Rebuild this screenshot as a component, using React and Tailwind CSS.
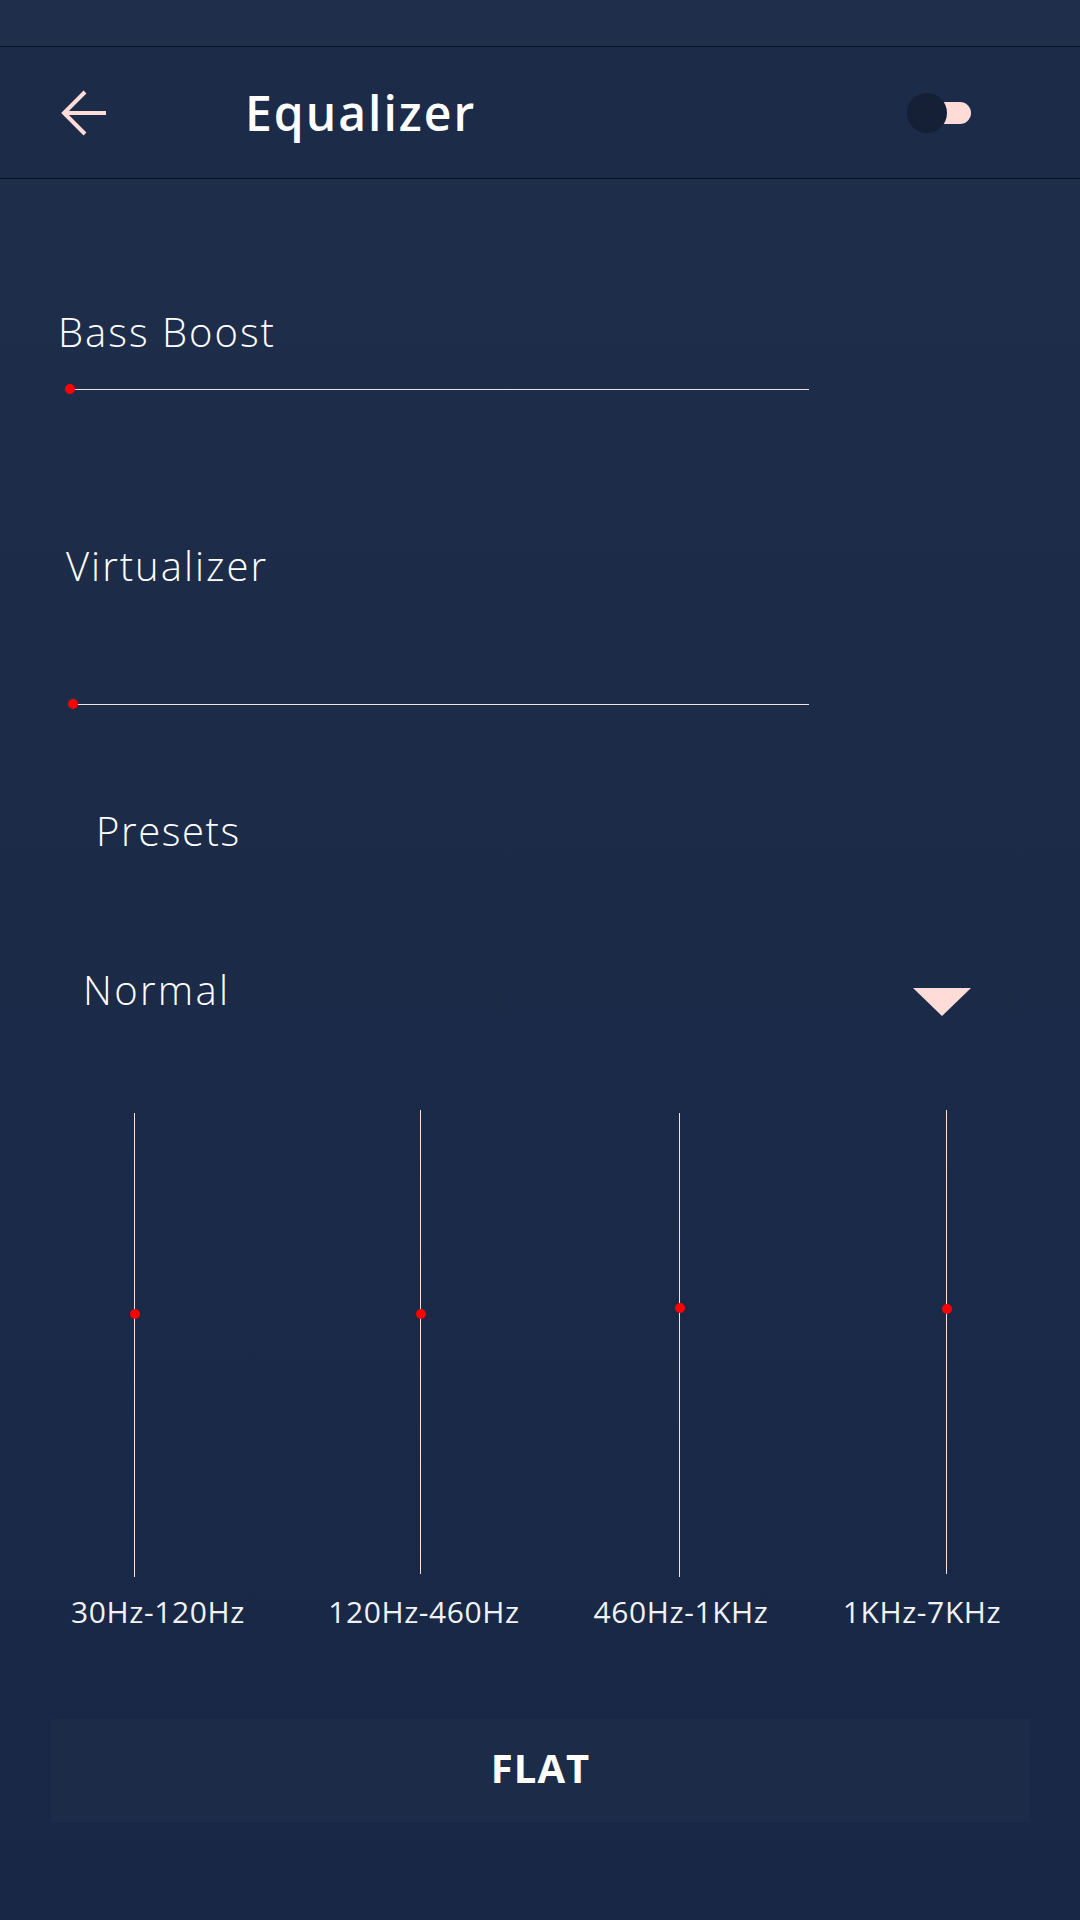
import { useState } from 'react'

const BANDS = [
  { label: '30Hz-120Hz', offset: 3, thumb: 201 },
  { label: '120Hz-460Hz', offset: 0, thumb: 204 },
  { label: '460Hz-1KHz', offset: 3, thumb: 195 },
  { label: '1KHz-7KHz', offset: 0, thumb: 199 },
]

function HSlider({ start, className }) {
  return (
    <div className={`relative flex h-[12px] items-center ${className}`}>
      <div className="h-[1px] bg-[#f3e2e0]" style={{ marginLeft: start, width: 809 - start }} />
      <div
        className="absolute top-[1px] h-[10px] w-[10px] rounded-full bg-[#ff0000]"
        style={{ left: start - 5 }}
      />
    </div>
  )
}

function VSlider({ band, className }) {
  return (
    <div className={`relative flex h-[464px] w-[11px] justify-center ${className}`} style={{ marginTop: band.offset }}>
      <div className="h-full w-[1px] bg-[#f3e2e0]" />
      <div
        className="absolute left-[0.5px] h-[10px] w-[10px] rounded-full bg-[#ff0000]"
        style={{ top: band.thumb - 5 }}
      />
    </div>
  )
}

export default function App() {
  const [enabled, setEnabled] = useState(false)

  return (
    <div className="flex h-[1920px] w-[1080px] flex-col overflow-hidden bg-gradient-to-b from-[#1f2e4a] to-[#172745] font-['Open_Sans','Liberation_Sans',sans-serif] text-white">
      <div className="h-[47px] border-b border-[#0a101c] bg-[#1f2e4a]" />

      <header className="flex h-[132px] items-center border-b border-[#0a101c] bg-[#1c2b48]">
        <button type="button" className="ml-[60px] flex h-[46px] w-[48px] items-center justify-center">
          <svg width="48" height="46" viewBox="0 0 48 46" fill="none">
            <path d="M46 23H5M25 2L4 23L25 44" stroke="#ffdcd8" strokeWidth="4" />
          </svg>
        </button>
        <h1 className="ml-[137px] text-[48px] font-semibold leading-none tracking-[2px]">Equalizer</h1>
        <button
          type="button"
          onClick={() => setEnabled(!enabled)}
          className="relative ml-auto mr-[109px] h-[40px] w-[64px]"
        >
          <span className="absolute left-[20px] top-[9px] h-[22px] w-[44px] rounded-r-full bg-[#ffdcd8]" />
          <span className="absolute left-0 top-0 h-[40px] w-[40px] rounded-full bg-[#152036]" />
        </button>
      </header>

      <p className="ml-[58px] mt-[133px] text-[40px] font-light leading-[40px] tracking-[2px]">Bass Boost</p>
      <HSlider start={70} className="mt-[31px]" />

      <p className="ml-[66px] mt-[151px] text-[40px] font-light leading-[40px] tracking-[2px]">Virtualizer</p>
      <HSlider start={73} className="mt-[112px]" />

      <p className="ml-[96px] mt-[101px] text-[40px] font-light leading-[40px] tracking-[1.6px]">Presets</p>

      <div className="mt-[119px] flex items-start">
        <p className="ml-[83px] text-[40px] font-light leading-[40px] tracking-[2.3px]">Normal</p>
        <svg className="ml-auto mr-[109px] mt-[18px]" width="58" height="28" viewBox="0 0 58 28">
          <path d="M0 0H58L29 28Z" fill="#ffdcd8" />
        </svg>
      </div>

      <div className="mt-[94px] flex items-start">
        <VSlider band={BANDS[0]} className="ml-[129px]" />
        <VSlider band={BANDS[1]} className="ml-[275px]" />
        <VSlider band={BANDS[2]} className="ml-[248px]" />
        <VSlider band={BANDS[3]} className="ml-[256px]" />
      </div>

      <div className="mt-[20px] flex text-[30px] font-normal leading-[30px] tracking-[0.6px] text-[#f2f2f6]">
        <span className="ml-[58px] w-[200px] text-center">{BANDS[0].label}</span>
        <span className="ml-[66px] w-[200px] text-center">{BANDS[1].label}</span>
        <span className="ml-[57px] w-[200px] text-center">{BANDS[2].label}</span>
        <span className="ml-[41px] w-[200px] text-center">{BANDS[3].label}</span>
      </div>

      <button
        type="button"
        className="ml-[51px] mt-[92px] h-[103px] w-[979px] bg-[#1c2b47] pb-[6px] text-[40px] font-bold tracking-[1px]"
      >
        FLAT
      </button>
    </div>
  )
}
